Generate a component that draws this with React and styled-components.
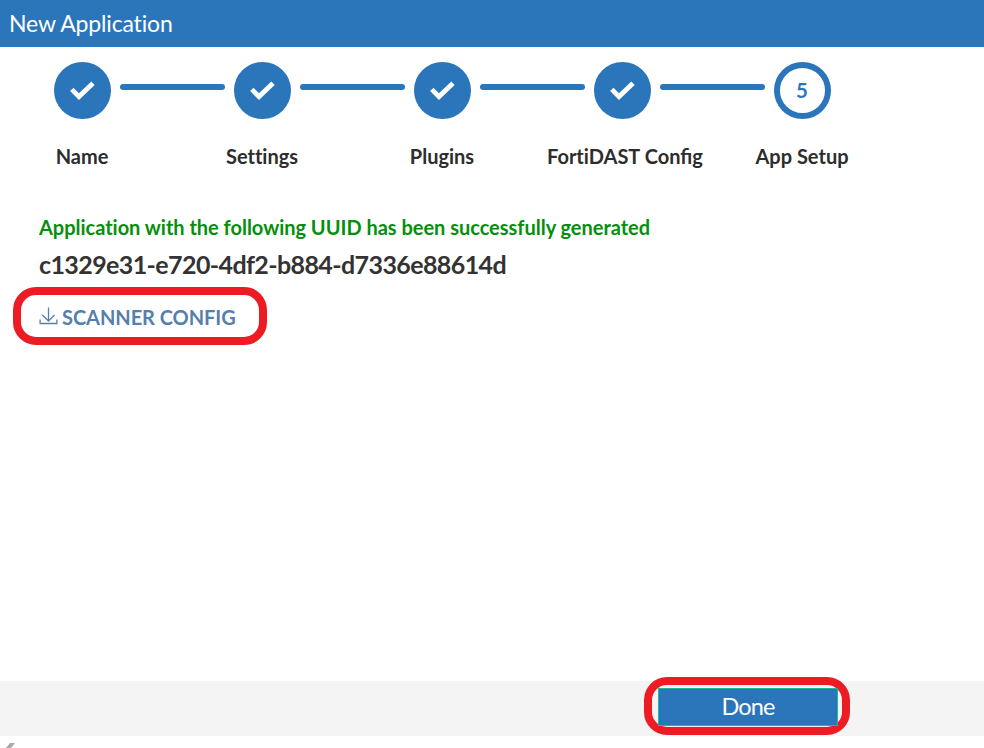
import React from "react";
import styled, { createGlobalStyle } from "styled-components";

const blue = "#2b76ba";

const GlobalStyle = createGlobalStyle`
  * { box-sizing: border-box; }
  body {
    margin: 0;
    background: #fff;
    font-family: Lato, "Liberation Sans", sans-serif;
    font-variant-ligatures: none;
    color: #2d2d2d;
    overflow: hidden;
  }
`;

const Page = styled.div`
  height: 748px;
  display: flex;
  flex-direction: column;
`;

const Header = styled.header`
  height: 47px;
  flex: none;
  padding-left: 9px;
  background: ${blue};
  color: #fff;
  font-size: 23px;
  line-height: 46px;
  letter-spacing: -0.17px;
`;

const Steps = styled.ol`
  display: flex;
  list-style: none;
  margin: 0;
  padding: 15px 0 0 7px;
`;

const Step = styled.li`
  width: 150px;
  margin-right: 30px;
  flex: none;
`;

const Track = styled.div`
  display: flex;
  width: 218px;
  padding-left: 47px;
`;

const Circle = styled.div`
  width: 57px;
  height: 57px;
  flex: none;
  display: flex;
  align-items: center;
  justify-content: center;
  border: 6px solid ${blue};
  border-radius: 50%;
  background: ${(p) => (p.$done ? blue : "#fff")};
  color: ${blue};
`;

const StepNumber = styled.span`
  padding: 0 1px 1px 0;
  font-size: 20.5px;
  font-weight: 700;
`;

const Connector = styled.div`
  width: 105px;
  height: 6px;
  flex: none;
  margin: 22px 0 0 9px;
  border-radius: 3px;
  background: ${blue};
`;

const StepLabel = styled.div`
  display: flex;
  justify-content: ${(p) => (p.$wide ? "flex-start" : "center")};
  margin-top: 24px;
  font-size: 20px;
  font-weight: 700;
  line-height: 26px;
  white-space: pre;
`;

const Ligated = styled.span`
  font-variant-ligatures: common-ligatures;
`;

const Content = styled.main`
  flex: 1;
  display: flex;
  flex-direction: column;
  align-items: flex-start;
  padding: 44px 0 0 13px;
`;

const Success = styled.p`
  margin: 0 0 0 26px;
  color: #058f0c;
  font-size: 20px;
  font-weight: 700;
  line-height: 28px;
  letter-spacing: -0.02px;
  white-space: nowrap;
`;

const Uuid = styled.p`
  margin: 6px 0 0 26px;
  color: #333;
  font-size: 25px;
  font-weight: 700;
  line-height: 34px;
  letter-spacing: -0.6px;
  white-space: nowrap;
`;

const ScannerHighlight = styled.div`
  width: 254px;
  height: 58px;
  margin-top: 6px;
  padding-left: 18px;
  display: flex;
  align-items: center;
  border: 8px solid #ed1c24;
  border-radius: 23px;
`;

const DownloadLink = styled.a`
  display: flex;
  align-items: center;
  gap: 4px;
  color: #5580ae;
  font-size: 20px;
  font-weight: 700;
  line-height: 26px;
  letter-spacing: -0.05px;
  white-space: nowrap;
  padding-top: 2px;

  svg { display: block; margin-top: -3px; }
`;

const Footer = styled.footer`
  position: relative;
  height: 55px;
  flex: none;
  background: #f4f4f4;
`;

const DoneHighlight = styled.div`
  position: absolute;
  left: 644px;
  top: -4px;
  width: 206px;
  height: 58px;
  padding: 3px 4px 3px 6px;
  border: 8px solid #ed1c24;
  border-radius: 23px;
`;

const DoneButton = styled.button`
  display: block;
  width: 180px;
  height: 38px;
  padding: 0 0 2px;
  border: 1px solid #1dbb94;
  background: ${blue};
  color: #fff;
  font: 400 23.5px/34px Lato, sans-serif;
  letter-spacing: -0.9px;
`;

const BottomEdge = styled.div`
  height: 12px;
  flex: none;
  padding: 7px 0 0 6px;

  svg { display: block; }
`;

const steps = [
  { label: "Name" },
  { label: "Settings" },
  { label: "Plugins" },
  { label: "FortiDAST ", tail: "Config" },
  { label: "App Setup" },
];

const Check = () => (
  <svg width="25" height="20" viewBox="0 0 25 20">
    <path d="M1.8 8.4 9 15.6 23 2.3" fill="none" stroke="#fff" strokeWidth="4.8" />
  </svg>
);

const DownloadIcon = () => (
  <svg width="19" height="18" viewBox="0 0 19 18" fill="none" stroke="currentColor" strokeWidth="1.3">
    <path d="M9.5 .5v13.2M3.4 8l6.1 6L15.6 8M1.1 12.5v4h16.8v-4" />
  </svg>
);

export default function App() {
  const last = steps.length - 1;
  return (
    <Page>
      <GlobalStyle />
      <Header>New Application</Header>
      <Steps>
        {steps.map((step, i) => (
          <Step key={step.label}>
            <Track>
              <Circle $done={i < last}>
                {i < last ? <Check /> : <StepNumber>{i + 1}</StepNumber>}
              </Circle>
              {i < last && <Connector />}
            </Track>
            <StepLabel $wide={Boolean(step.tail)}>
              {step.label}
              {step.tail && <Ligated>{step.tail}</Ligated>}
            </StepLabel>
          </Step>
        ))}
      </Steps>
      <Content>
        <Success>Application with the following UUID has been successfully generated</Success>
        <Uuid>c1329e31-e720-4df2-b884-d7336e88614d</Uuid>
        <ScannerHighlight>
          <DownloadLink>
            <DownloadIcon />
            SCANNER CONFIG
          </DownloadLink>
        </ScannerHighlight>
      </Content>
      <Footer>
        <DoneHighlight>
          <DoneButton>Done</DoneButton>
        </DoneHighlight>
      </Footer>
      <BottomEdge>
        <svg width="10" height="5" viewBox="0 0 10 5">
          <path d="M4 0h5L5 5H0z" fill="#aaa" />
        </svg>
      </BottomEdge>
    </Page>
  );
}
